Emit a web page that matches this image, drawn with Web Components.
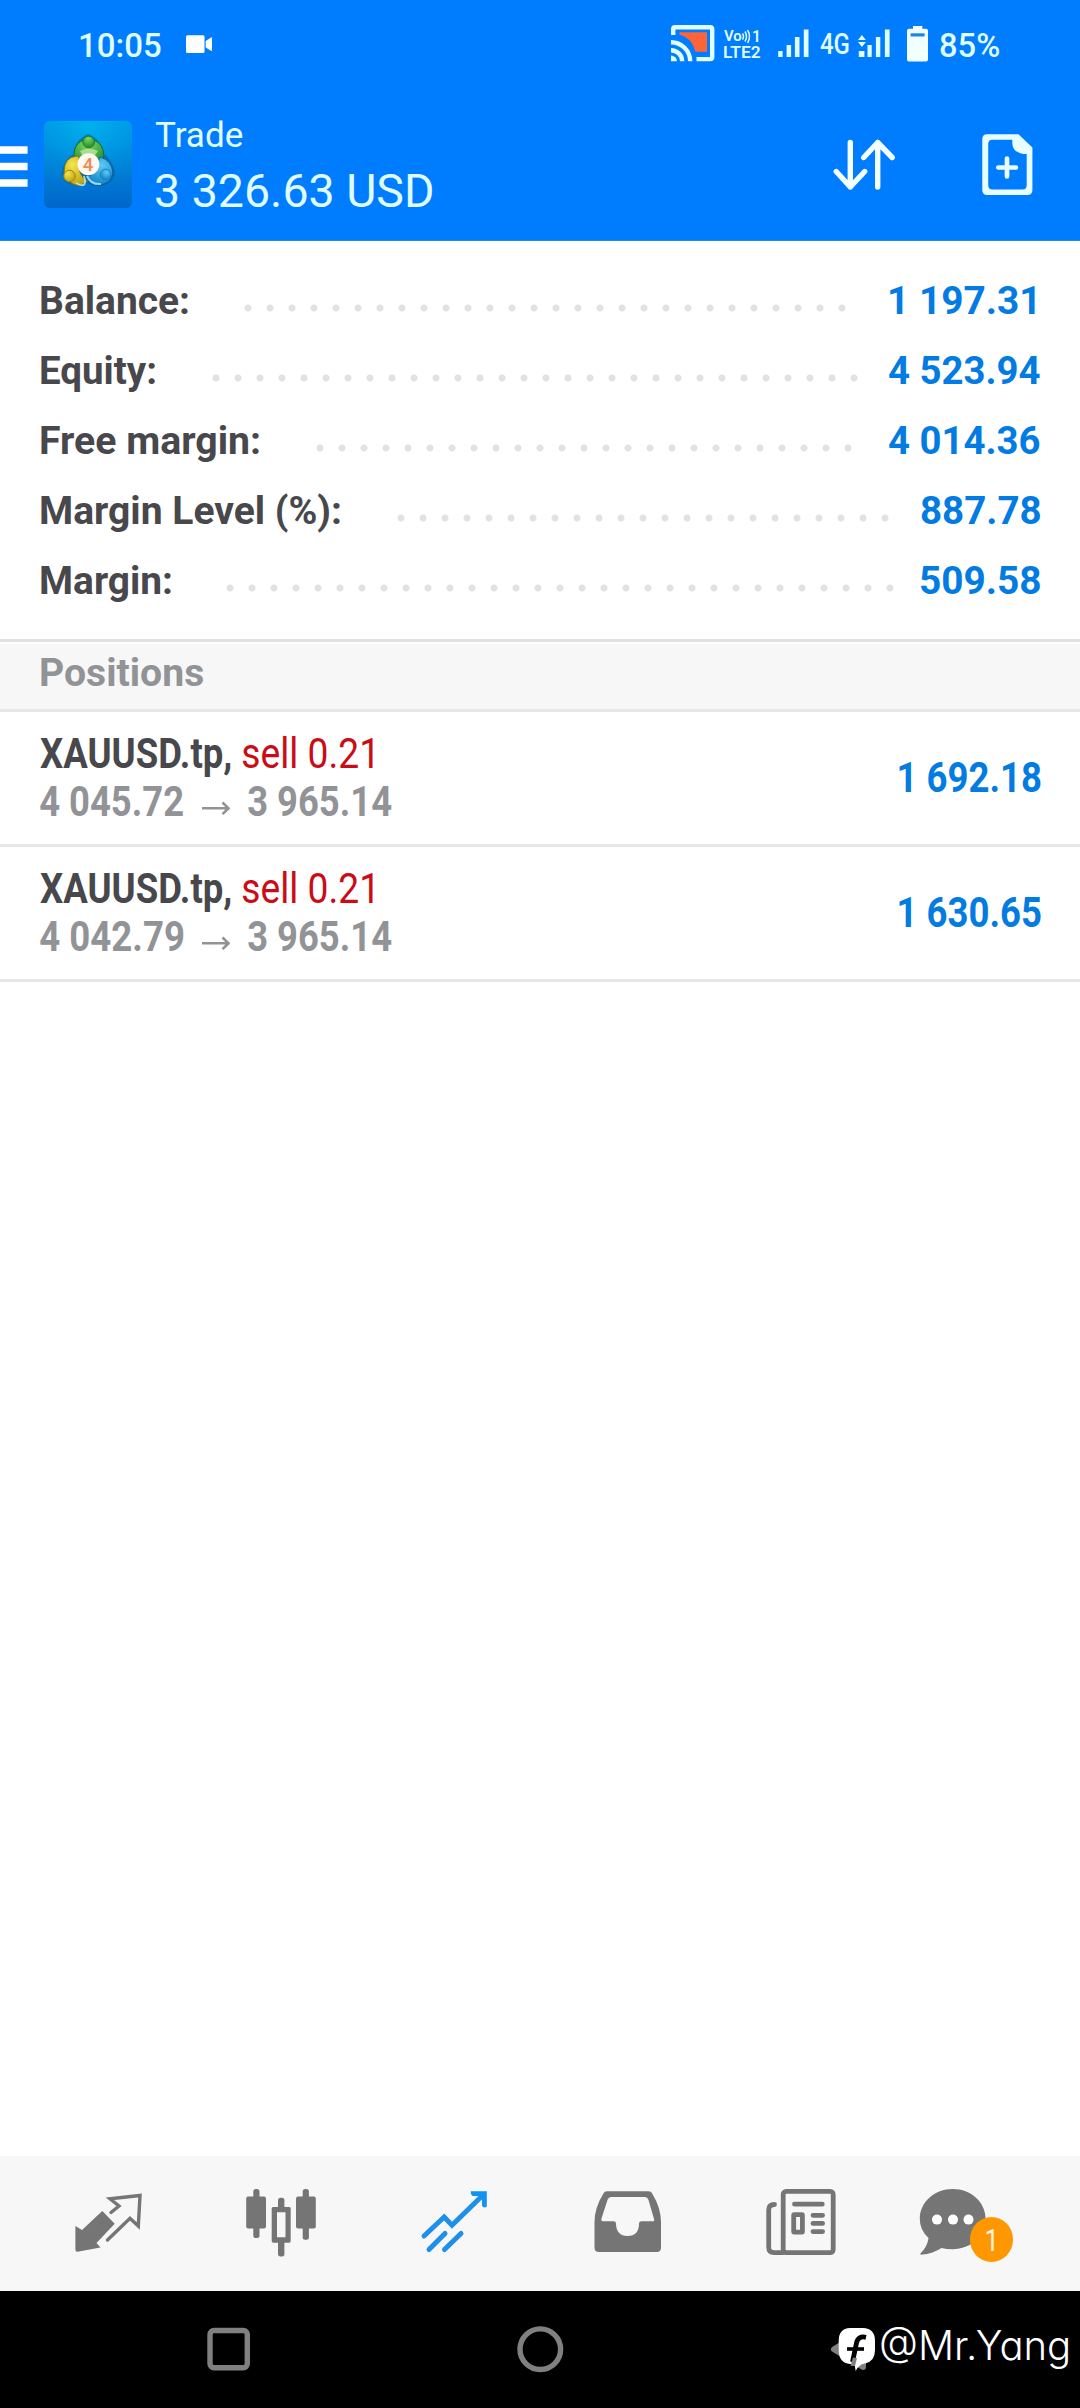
<!DOCTYPE html>
<html lang="en">
<head>
<meta charset="utf-8">
<title>Trade</title>
<style>
html,body{margin:0;padding:0;background:#fff}
body{width:1080px;height:2408px;overflow:hidden;font-family:Roboto,"Liberation Sans",sans-serif}
</style>
</head>
<body>
<trade-app></trade-app>
<script>
const define = (name, html, init) => customElements.define(name, class extends HTMLElement {
  connectedCallback() {
    if (this.shadowRoot) return;
    const root = this.attachShadow({ mode: 'open' });
    root.innerHTML = typeof html === 'function' ? html(this) : html;
    if (init) init(this, root);
  }
});

/* A single line of text whose ink is fitted to the width w. */
const ctx = document.createElement('canvas').getContext('2d');
define('fit-text', el => {
  const w = +el.getAttribute('w'), size = +el.getAttribute('size'), weight = el.getAttribute('weight') || 400;
  const family = el.getAttribute('family') || 'Roboto';
  const text = el.getAttribute('text');
  ctx.font = `${weight} ${size}px "${family}"`;
  const m = ctx.measureText(text);
  const k = w / (m.actualBoundingBoxRight + m.actualBoundingBoxLeft);
  return `<style>
    :host{display:block;flex:none;width:${w}px;line-height:${el.getAttribute('lh') || Math.ceil(size * 1.2)}px}
    span{display:inline-block;vertical-align:top;white-space:pre;font:${weight} ${size}px "${family}","Liberation Sans",sans-serif;line-height:inherit;
      transform-origin:0 50%;transform:translateX(${m.actualBoundingBoxLeft * k}px) scaleX(${k});
      font-feature-settings:${family === 'Inter' ? '"cv11","ss03"' : 'normal'}}
  </style><span>${text}</span>`;
});

define('status-bar', `<style>
  :host{display:flex;height:90px;align-items:center;color:#dffcff}
  svg{display:block;flex:none}
  .volte{display:flex;flex-direction:column;margin-left:9px;padding-bottom:1px}
  .vo{display:flex;align-items:center}
</style>
<fit-text text="10:05" w="81" size="33" weight="500" style="margin:2px 0 0 79.5px"></fit-text>
<svg style="margin-left:25px" width="27" height="90" viewBox="186 0 27 90" fill="#fff"><rect x="186" y="35.3" width="18.5" height="17.6" rx="1.5"/><path d="M205.7 41 211 37.4Q212 37 212 38V50.4Q212 51.2 211 50.8L205.7 47.5Z"/></svg>
<svg style="margin-left:458.5px" width="44" height="90" viewBox="672 0 44 90" fill="none" stroke="#dffcff" stroke-width="4.4">
  <path d="M680.5 32.3H708V51.7H696.5Q693 38 680.5 34.5Z" fill="#ff6338" stroke="none"/>
  <path d="M674.2 35V29Q674.2 27.2 676 27.2H711.2Q713.2 27.2 713.2 29.2V57Q713.2 59.1 711.2 59.1H697.5"/>
  <path d="M672 42.2A19.2 19.2 0 0 1 691.2 61.2M672 50.2A11.2 11.2 0 0 1 683.2 61.2"/><path d="M672 55.5A6 6 0 0 1 678 61.3H672Z" fill="#dffcff" stroke="none"/>
</svg>
<div class="volte">
  <div class="vo"><fit-text text="Vo" w="18" size="15.5" weight="600" lh="15"></fit-text><svg width="10" height="15" viewBox="1 0 10 15" fill="none" stroke="#dffcff" stroke-width="1.5"><path d="M1.5 4.5Q3.5 7.5 1.5 10.5M4 2.5Q7 7.5 4 12.5M6.5 1Q10.5 7.5 6.5 14"/></svg><fit-text text="1" w="5.5" size="17" weight="600" lh="15" style="margin-left:1px"></fit-text></div>
  <fit-text text="LTE2" w="36.5" size="16" weight="600" lh="17"></fit-text>
</div>
<svg style="margin-left:17px" width="31" height="90" viewBox="778.5 0 31 90" fill="#dffcff"><path d="M778.7 51h4.4v6h-4.4zM787.1 45h4.5v12h-4.5zM795.4 37h4.6v20h-4.6zM804.3 29.5h4.7V57h-4.7z"/></svg>
<fit-text text="4G" w="28.5" size="29" weight="500" style="margin:0 0 2px 11px"></fit-text>
<svg style="margin-left:10px" width="32" height="90" viewBox="859.5 0 32 90" fill="#dffcff"><path d="M863.4 35l4 5h-8zM863.4 47l-4-5h8zM860.3 51h5.6v6h-5.6zM869 45h4.2v12H869zM877.4 37h4.4v20h-4.4zM886.4 29.5h4.7V57h-4.7z"/></svg>
<svg style="margin-left:17px" width="21" height="90" viewBox="909 0 21 90"><path d="M915 28.7V26h9.3v2.7H928q2 0 2 2V59.4q0 2-2 2H911q-2 0-2-2V30.7q0-2 2-2Z" fill="#f2ffff"/><path d="M912.6 33.3h14v3.2h-14z" fill="#1c86e8"/></svg>
<fit-text text="85%" w="59" size="33" weight="500" style="margin:2px 0 0 12px"></fit-text>`);

define('app-logo', `<style>:host{display:block;flex:none}svg{display:block}</style>
<svg width="88" height="151" viewBox="44 90 88 151">
  <defs>
    <linearGradient id="bg" x1="0" y1="0" x2="0" y2="1"><stop offset="0" stop-color="#009fea"/><stop offset=".5" stop-color="#0082d8"/><stop offset="1" stop-color="#0066c9"/></linearGradient>
    <radialGradient id="gl" cx=".5" cy=".05" r=".75"><stop offset="0" stop-color="#00b8ee" stop-opacity=".8"/><stop offset="1" stop-color="#008fe0" stop-opacity="0"/></radialGradient>
    <radialGradient id="g" cx=".45" cy=".2" r=".8"><stop offset="0" stop-color="#7fd85a"/><stop offset="1" stop-color="#1d8a34"/></radialGradient>
    <radialGradient id="y" cx=".35" cy=".3" r=".8"><stop offset="0" stop-color="#f4e64a"/><stop offset="1" stop-color="#b99d0e"/></radialGradient>
    <radialGradient id="b" cx=".6" cy=".3" r=".8"><stop offset="0" stop-color="#5ccaf5"/><stop offset="1" stop-color="#0879c4"/></radialGradient>
  </defs>
  <rect x="44" y="121" width="88" height="87" rx="6" fill="url(#bg)"/><rect x="44" y="121" width="88" height="87" rx="6" fill="url(#gl)"/>
  <path d="M88 134C79 137 73 147 74 154C65 158 61 169 62.500 177C65 184 76 188 87 183C97 189 111 186 114.500 176C116 168 110 158 103.500 154C103 146 97 137 88 134Z" fill="#075f8e" opacity=".6"/>
  <path d="M75 165Q70 141 88.500 139Q108 141 102.500 166L96 160Q89 150 82 160Z" fill="url(#g)" stroke="#176f35"/>
  <path d="M77 156Q64 157 64 172Q67 185 80 185.500L88 181Q77 177 79 157Z" fill="url(#y)" stroke="#81721a"/>
  <path d="M100 157Q112 160 113 173Q111 184 99 185Q88 184 85 176Q99 176 99 159Z" fill="url(#b)" stroke="#075fa0"/>
  <path d="M80 151Q89 146 98 151L94 157H83Z" fill="#d6efb0" opacity=".65"/><path d="M76 183Q88 190 84 176M87 176Q91 185 101 184" fill="none" stroke="#bceeff" stroke-width="2" opacity=".8"/>
  <circle cx="88.700" cy="142" r="5.800" fill="url(#g)" stroke="#237e2f"/><circle cx="69.500" cy="176" r="5.800" fill="url(#y)" stroke="#9d8514"/><circle cx="105.500" cy="174.500" r="5.300" fill="url(#b)" stroke="#1585c0"/>
  <circle cx="88.400" cy="164.200" r="11" fill="#fff8f0"/>
  <text x="88" y="171" text-anchor="middle" font-family="Roboto,sans-serif" font-size="18.500" font-weight="500" fill="#ef8a55">4</text>
</svg>`);

define('app-bar', `<style>
  :host{display:flex;height:150px;border-bottom:1px solid #2a86cf;color:#dffcff}
  svg{display:block;flex:none}
  .titles{display:flex;flex-direction:column;padding-top:17px;margin-left:23px;width:277px}
</style>
<svg width="28" height="151" viewBox="0 90 28 151" fill="#fff"><path d="M0 146.200h27.600v7.500H0zM0 162.700h27.600v7.500H0zM0 179.300h27.600v7.500H0z"/></svg>
<app-logo style="margin-left:16px"></app-logo>
<div class="titles"><fit-text text="Trade" w="87.500" size="35.500" lh="56"></fit-text><fit-text text="3 326.63 USD" w="276" size="46.500" lh="56" style="margin-left:.5px"></fit-text></div>
<svg style="margin-left:397px" width="70" height="151" viewBox="830 90 70 151" fill="none" stroke="#f4ffff" stroke-width="5.400" stroke-linecap="round" stroke-linejoin="round"><path d="M851.300 142.500V187M837.200 171.500 851.300 187 865.700 171.500M878.700 187V142.500M864.700 157.500 878.700 142.500 893.200 157.500"/></svg>
<svg style="margin-left:80px" width="60" height="151" viewBox="980 90 60 151"><path fill-rule="evenodd" fill="#e8ffff" d="M988 134.300H1019.500L1033.400 147.500V190Q1033.400 195 1028.400 195H988.300Q983.300 195 983.300 190V139.300Q983.300 134.300 988 134.300ZM993.500 139.700Q989.200 139.700 989.200 144V185Q989.200 189.500 993.500 189.500H1023.500Q1027.700 189.500 1027.700 185V154H1024Q1013.500 152 1013.300 143V139.700Z"/><path d="M1008 158.500V176.500M999.300 167.500H1016.900" stroke="#e8ffff" stroke-width="4.700" stroke-linecap="round"/></svg>`);

define('summary-row', el => {
  const a = n => el.getAttribute(n);
  return `<style>
  :host{display:flex;height:70px;align-items:center;padding:0 ${a('pr') || 40}px 0 41px}
  .d{flex:none;height:22px;margin:13px auto 0 ${a('gap')}px;width:${a('dots') * 22}px;background:radial-gradient(circle at 11px 11px,#e2e2e3 3px,transparent 4px) 0 0/22px 22px}
  fit-text{color:#47474c}.v{color:#027be3}
  </style>
  <fit-text text="${a('label')}" w="${a('lw')}" size="39.400" weight="700"></fit-text><div class="d"></div>
  <fit-text class="v" text="${a('value')}" w="${a('vw')}" size="39.400" weight="700"></fit-text>`;
});

define('account-summary', `<style>:host{display:block;box-sizing:border-box;height:401px;padding-top:25px;border-bottom:3px solid #e1e1e1;background:#fff}</style>
<summary-row label="Balance:" lw="147" gap="48.600" dots="28" value="1 197.31" vw="145" pr="45"></summary-row>
<summary-row label="Equity:" lw="114" gap="49.500" dots="30" value="4 523.94" vw="151"></summary-row>
<summary-row label="Free margin:" lw="218" gap="49.500" dots="25" value="4 014.36" vw="151"></summary-row>
<summary-row label="Margin Level (%):" lw="299" gap="49.500" dots="23" value="887.78" vw="119"></summary-row>
<summary-row label="Margin:" lw="130" gap="48.400" dots="31" value="509.58" vw="119"></summary-row>`);

define('section-head', `<style>:host{display:flex;align-items:center;box-sizing:border-box;height:68px;margin-top:2px;padding:0 0 8px 41px;background:#f7f7f7;border-bottom:3px solid #e7e7e7;color:#929396}</style>
<fit-text text="Positions" w="162" size="39.400" weight="700"></fit-text>`);

define('position-row', el => {
  const a = n => el.getAttribute(n);
  return `<style>
  :host{display:flex;justify-content:space-between;height:132px;padding:0 40px 0 40px;border-bottom:3px solid #e7e7e7}
  .l{padding-top:17px}.r{display:flex;height:48px}
  .s{color:#47474c}.t{color:#c90c18;margin-left:12px}.p{color:#929396}
  svg{display:block;margin:0 18px}.v{color:#027be3;padding-top:41px}
  </style>
  <div class="l"><div class="r"><fit-text class="s" text="XAUUSD.tp," w="191" size="43" lh="48" weight="700"></fit-text><fit-text class="t" text="sell 0.21" w="130" size="43" lh="48"></fit-text></div>
  <div class="r p"><fit-text text="${a('from')}" w="143.500" size="43" lh="48" weight="700"></fit-text><svg width="28" height="48" viewBox="0 0 28 48" fill="none" stroke="#929396" stroke-width="2.600"><path d="M0 31.300H26M20.500 25.500 26.500 31.300 20.500 37.100"/></svg><fit-text text="${a('to')}" w="143.500" size="43" lh="48" weight="700"></fit-text></div></div>
  <fit-text class="v" text="${a('profit')}" w="141.500" size="43" lh="48" weight="700"></fit-text>`;
});

define('tab-bar', `<style>
  :host{display:flex;height:135px;padding-left:21.500px;background:#f7f7f7}
  svg{display:block;flex:none}
</style>
<svg width="173" height="135" viewBox="22 2156 173 135"><path d="M75.400 2226 82 2230 102.300 2211 114.700 2223.700 96.500 2243 100.500 2247.500 77.500 2251.800Q75.400 2252 75.400 2249.500Z" fill="#757575"/><path d="M111 2212.500 119 2206 110 2198.700 140 2195.500 138.300 2226 130 2218.300 107.500 2240" fill="none" stroke="#757575" stroke-width="3.400" stroke-linecap="round"/></svg>
<svg width="173" height="135" viewBox="195 2156 173 135" fill="#757575"><rect x="246.200" y="2196.600" width="19.800" height="32" rx="2"/><rect x="253.300" y="2189" width="6.200" height="49" rx="2.500"/><path fill-rule="evenodd" d="M273 2207H289.500Q290.700 2207 290.700 2208.500V2241Q290.700 2242.700 289 2242.700H273.300Q271.700 2242.700 271.700 2241V2208.500Q271.700 2207 273 2207ZM277 2212.300V2237.300H285.500V2212.300Z"/><rect x="278" y="2197.700" width="6.400" height="12" rx="2.500"/><rect x="278" y="2240" width="6.400" height="16.500" rx="2.500"/><rect x="296" y="2196.600" width="19.800" height="32" rx="2"/><rect x="302.700" y="2189" width="6.200" height="50.700" rx="2.500"/></svg>
<svg width="173" height="135" viewBox="368 2156 173 135" fill="none" stroke="#1e90ea" stroke-width="5" stroke-linecap="round"><path d="M424 2236 444.200 2217 452 2225.300 483 2195M429 2249.500 445 2233.500M444.500 2249.500 461 2233.500"/><path d="M470.800 2191.200H486.800V2206.500Q484.500 2208.500 482 2206V2199L479 2196H472.500Q470.200 2193.500 470.800 2191.200Z" fill="#1094f4" stroke="none"/></svg>
<svg width="173" height="135" viewBox="541 2156 173 135"><path fill-rule="evenodd" fill="#757575" d="M607 2191.200H648.500Q651 2191.200 652.200 2193.500Q661 2208 661 2222V2247.500Q661 2252 656.500 2252H599Q594.500 2252 594.500 2247.500V2222Q594.500 2208 603.400 2193.500Q604.500 2191.200 607 2191.200ZM611.500 2197Q608.500 2197 607.500 2200L601.300 2219Q601 2221.300 603 2221.300H613.500Q616 2221.300 616 2224Q616.500 2236 627.500 2236Q638.800 2236 639 2224Q639 2221.300 641.500 2221.300H652.500Q654.800 2221.300 654 2219L648.500 2200Q647.500 2197 644.500 2197Z"/></svg>
<svg width="173" height="135" viewBox="714 2156 173 135" fill="none" stroke="#757575" stroke-width="4.800"><rect x="783.200" y="2191.400" width="50" height="61.200" rx="3"/><path d="M783.200 2252.600H774Q768.700 2252.600 768.700 2247V2210Q768.700 2204.500 774.500 2204.500" stroke-linecap="round"/><path d="M794.500 2204.200H822.300M813 2215.300H822.600M813 2223.400H822.600M813 2231.600H822.600" stroke-linecap="round"/><rect x="793.700" y="2214.700" width="8.700" height="17.400" rx=".5"/></svg>
<chat-tab></chat-tab>`);

define('chat-tab', `<style>
  :host{display:block;position:relative;width:173px;height:135px}
  svg{display:block}
  .badge{position:absolute;left:83.300px;top:61.300px;width:43.600px;height:45px;border-radius:50%;background:#ff9800;color:#fff4e0;display:flex;align-items:center;justify-content:center}
</style>
<svg width="173" height="135" viewBox="887 2156 173 135"><path fill="#757575" d="M952.700 2189C971 2189 985.600 2202 985.600 2219S971 2249.200 952.700 2249.200Q946.500 2249.200 941.500 2248Q933.500 2253.500 921 2254.800Q919.500 2254.300 921 2252.800Q927.500 2246.500 928.500 2238Q919.800 2230 919.800 2219C919.800 2202 934.500 2189 952.700 2189Z"/><g fill="#fff"><circle cx="937" cy="2219.600" r="5"/><circle cx="953" cy="2219.600" r="5"/><circle cx="968.500" cy="2219.600" r="5"/></g></svg>
<div class="badge"><fit-text text="1" w="8" size="32" style="margin:2px 4px 0 0"></fit-text></div>`);

define('system-nav', `<style>
  :host{display:flex;height:117px;background:#000;color:#fff}
  svg{display:block;flex:none}
</style>
<svg style="margin-left:203.500px" width="50" height="117" viewBox="204 2291 50 117"><rect x="210" y="2330.500" width="37.300" height="37.200" rx="4" fill="none" stroke="#808080" stroke-width="5.400"/></svg>
<svg style="margin-left:261px" width="50" height="117" viewBox="515 2291 50 117"><circle cx="540.300" cy="2349.200" r="20.300" fill="none" stroke="#808080" stroke-width="5.400"/></svg>
<svg style="margin-left:263px" width="50" height="117" viewBox="828 2291 50 117"><path d="M834 2349.300 863 2331.500V2367Z" fill="#808080" stroke="#808080" stroke-width="6" stroke-linejoin="round"/><path d="M850 2328H863Q875 2328.500 875 2341V2350Q875 2361.500 865 2363.500Q858.500 2364.500 855.700 2371L854.500 2364H850Q838.700 2363 838.700 2350V2341Q838.700 2328.500 850 2328Z" fill="#fff"/><path d="M866 2337.300Q858 2335.500 856.500 2343L852.500 2362" fill="none" stroke="#000" stroke-width="4.800"/><path d="M847 2349H864" fill="none" stroke="#000" stroke-width="3.600"/><path d="M853 2357.500 850.500 2366H855L857 2358Z" fill="#808080"/></svg>
<fit-text text="@Mr.Yang" w="186" size="40.500" weight="300" lh="110" family="Inter" style="margin-left:3px"></fit-text>`);

define('trade-app', `<style>
  :host{display:flex;flex-direction:column;width:1080px;height:2408px;background:#fff}
  header{background:#007dff}
  main{flex:1}
</style>
<header><status-bar></status-bar><app-bar></app-bar></header>
<main>
  <account-summary></account-summary>
  <section-head></section-head>
  <position-row from="4 045.72" to="3 965.14" profit="1 692.18"></position-row>
  <position-row from="4 042.79" to="3 965.14" profit="1 630.65"></position-row>
</main>
<tab-bar></tab-bar>
<system-nav></system-nav>`);
</script>
</body>
</html>
